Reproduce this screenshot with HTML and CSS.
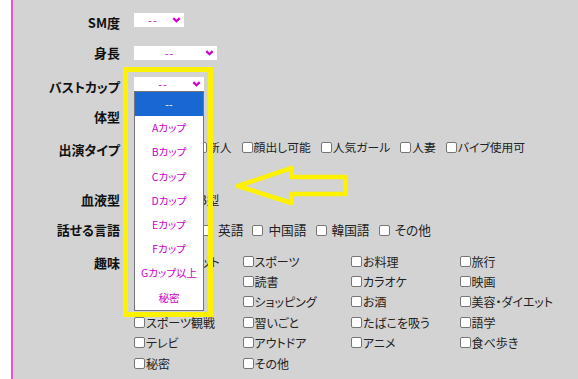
FILE: index.html
```html
<!DOCTYPE html>
<html lang="ja">
<head>
  <meta charset="UTF-8" />
  <title>プロフィール検索</title>
  <link rel="stylesheet" href="styles.css">
</head>
<body>
  <div class="page">
    <form class="profile">

      <div class="row r-sm">
        <div class="label">SM度</div>
        <div class="field">
          <div class="select w50">
            <span class="val">--</span>
            <svg class="chev" viewBox="0 0 10 7"><polyline points="1.3,1.3 5,5 8.7,1.3" /></svg>
          </div>
        </div>
      </div>

      <div class="row r-height">
        <div class="label short">身長</div>
        <div class="field">
          <div class="select w83">
            <span class="val">--</span>
            <svg class="chev" viewBox="0 0 10 7"><polyline points="1.3,1.3 5,5 8.7,1.3" /></svg>
          </div>
        </div>
      </div>

      <div class="row r-cup">
        <div class="label">バストカップ</div>
        <div class="field">
          <div class="select w70 open">
            <span class="val">--</span>
            <svg class="chev" viewBox="0 0 10 7"><polyline points="1.3,1.3 5,5 8.7,1.3" /></svg>
            <ul class="options">
              <li class="on">--</li>
              <li>Aカップ</li>
              <li>Bカップ</li>
              <li>Cカップ</li>
              <li>Dカップ</li>
              <li>Eカップ</li>
              <li>Fカップ</li>
              <li>Gカップ以上</li>
              <li>秘密</li>
            </ul>
            <!-- annotation -->
            <div class="frame"></div>
          </div>
        </div>
      </div>

      <div class="row r-body">
        <div class="label">体型</div>
        <div class="field">
          <div class="select w60">
            <span class="val">--</span>
            <svg class="chev" viewBox="0 0 10 7"><polyline points="1.3,1.3 5,5 8.7,1.3" /></svg>
          </div>
        </div>
      </div>

      <div class="row r-type">
        <div class="label">出演タイプ</div>
        <div class="field">
          <div class="checks">
            <label class="check"><span class="box"></span>素人OK</label>
            <label class="check"><span class="box"></span>新人</label>
            <label class="check"><span class="box"></span>顔出し可能</label>
            <label class="check"><span class="box"></span>人気ガール</label>
            <label class="check"><span class="box"></span>人妻</label>
            <label class="check"><span class="box"></span>バイブ使用可</label>
          </div>
          <div class="checks">
            <label class="check"><span class="box"></span>マッサージ</label>
          </div>
        </div>
      </div>

      <div class="row r-blood">
        <div class="label">血液型</div>
        <div class="field">
          <div class="checks spaced blood">
            <label class="check"><span class="box"></span>A型</label>
            <label class="check"><span class="box"></span>B型</label>
          </div>
        </div>
      </div>

      <div class="row r-lang">
        <div class="label">話せる言語</div>
        <div class="field">
          <div class="checks spaced langs">
            <label class="check"><span class="box"></span>日本語</label>
            <label class="check"><span class="box"></span>英語</label>
            <label class="check"><span class="box"></span>中国語</label>
            <label class="check"><span class="box"></span>韓国語</label>
            <label class="check"><span class="box"></span>その他</label>
          </div>
        </div>
      </div>

      <div class="row r-hobby">
        <div class="label">趣味</div>
        <div class="field">
          <div class="hobbies">
            <label class="check"><span class="box"></span>インターネット</label>
            <label class="check"><span class="box"></span>スポーツ</label>
            <label class="check"><span class="box"></span>お料理</label>
            <label class="check"><span class="box"></span>旅行</label>
            <label class="check"><span class="box"></span>音楽鑑賞</label>
            <label class="check"><span class="box"></span>読書</label>
            <label class="check"><span class="box"></span>カラオケ</label>
            <label class="check"><span class="box"></span>映画</label>
            <label class="check"><span class="box"></span>ゲーム</label>
            <label class="check"><span class="box"></span>ショッピング</label>
            <label class="check"><span class="box"></span>お酒</label>
            <label class="check"><span class="box"></span>美容・ダイエット</label>
            <label class="check"><span class="box"></span>スポーツ観戦</label>
            <label class="check"><span class="box"></span>習いごと</label>
            <label class="check"><span class="box"></span>たばこを吸う</label>
            <label class="check"><span class="box"></span>語学</label>
            <label class="check"><span class="box"></span>テレビ</label>
            <label class="check"><span class="box"></span>アウトドア</label>
            <label class="check"><span class="box"></span>アニメ</label>
            <label class="check"><span class="box"></span>食べ歩き</label>
            <label class="check"><span class="box"></span>秘密</label>
            <label class="check"><span class="box"></span>その他</label>
          </div>
        </div>
      </div>

    </form>

    <!-- annotation arrow -->
    <svg class="arrow" viewBox="0 0 125 55">
      <polygon points="8,26 61.5,8 61.5,17 115.5,17 115.5,34 61.5,34 61.5,43" />
    </svg>
  </div>
</body>
</html>
```

FILE: styles.css
```css
body {
  margin: 0;
  background-color: #ffffff;
  font-family: "Noto Sans CJK JP", sans-serif;
  overflow: hidden;
}

.page {
  position: relative;
  margin-left: 11px;
  padding-top: 13px;
  min-height: 379px;
  box-sizing: border-box;
  background-color: #d3d3d3;
  border-left: 2px solid #f24fc4;
}

.profile {
  margin: 0;
}

.row {
  display: flex;
  align-items: flex-start;
}

.r-sm { height: 33px; }
.r-height { height: 31px; }
.r-cup { height: 30px; }
.r-body { height: 30px; }
.r-type { height: 53px; }
.r-blood { height: 30px; }
.r-lang { height: 31px; }

.label {
  flex: none;
  width: 107px;
  margin-right: 14px;
  text-align: right;
  font-size: 13px;
  font-weight: bold;
  line-height: 20px;
  color: #111;
  font-feature-settings: "palt";
}

.label.short {
  line-height: 14px;
}

.r-type .label { padding-top: 3px; }
.r-hobby .label { padding-top: 2px; }

.field {
  flex: 1;
}

/* selects */
.select {
  position: relative;
  display: flex;
  align-items: center;
  height: 14px;
  background-color: #fff;
}

.w50 { width: 50px; }
.w60 { width: 60px; }
.w70 { width: 70px; }
.w83 { width: 83px; }

.select .val {
  flex: 1;
  text-align: center;
  font-size: 11px;
  line-height: 14px;
  letter-spacing: 1px;
  color: #cc00cc;
}

.chev {
  width: 9px;
  height: 6px;
  margin-right: 3px;
}

.chev polyline {
  fill: none;
  stroke: #cc00cc;
  stroke-width: 2.6;
}

.options {
  position: absolute;
  left: 0;
  top: 100%;
  z-index: 2;
  width: 70px;
  margin: 0;
  padding: 0;
  list-style: none;
  box-sizing: border-box;
  background-color: #fff;
  border: 1px solid #767676;
}

.options li {
  height: 24.2px;
  line-height: 24.2px;
  text-align: center;
  font-size: 10.5px;
  color: #cc00cc;
  font-feature-settings: "palt";
}

.options li.on {
  background-color: #1967d2;
  color: #fff;
}

.frame {
  position: absolute;
  left: -11px;
  top: -10px;
  z-index: 3;
  width: 90px;
  height: 250px;
  box-sizing: border-box;
  border: 5px solid #fff200;
}

/* checkboxes */
.checks {
  display: flex;
  column-gap: 10px;
  font-size: 11.8px;
  line-height: 20px;
  color: #222;
  font-feature-settings: "palt";
}

.check {
  display: flex;
  align-items: center;
  white-space: nowrap;
}

.box {
  flex: none;
  width: 11px;
  height: 11px;
  margin-right: 1px;
  box-sizing: border-box;
  background-color: #fff;
  border: 1px solid #767676;
  border-radius: 2px;
}

.checks.spaced {
  column-gap: 9px;
  font-size: 12.7px;
}

.checks.spaced .box {
  margin-right: 5px;
}

.blood {
  padding-left: 3px;
}

.langs {
  padding-left: 5px;
}

.hobbies {
  display: grid;
  grid-template-columns: repeat(4, 108.5px);
  grid-auto-rows: 20.4px;
  font-size: 12px;
  color: #222;
  font-feature-settings: "palt";
}

.arrow {
  position: absolute;
  left: 217px;
  top: 160px;
  width: 125px;
  height: 55px;
}

.arrow polygon {
  fill: none;
  stroke: #fff200;
  stroke-width: 4.5;
  stroke-linejoin: round;
}
```
